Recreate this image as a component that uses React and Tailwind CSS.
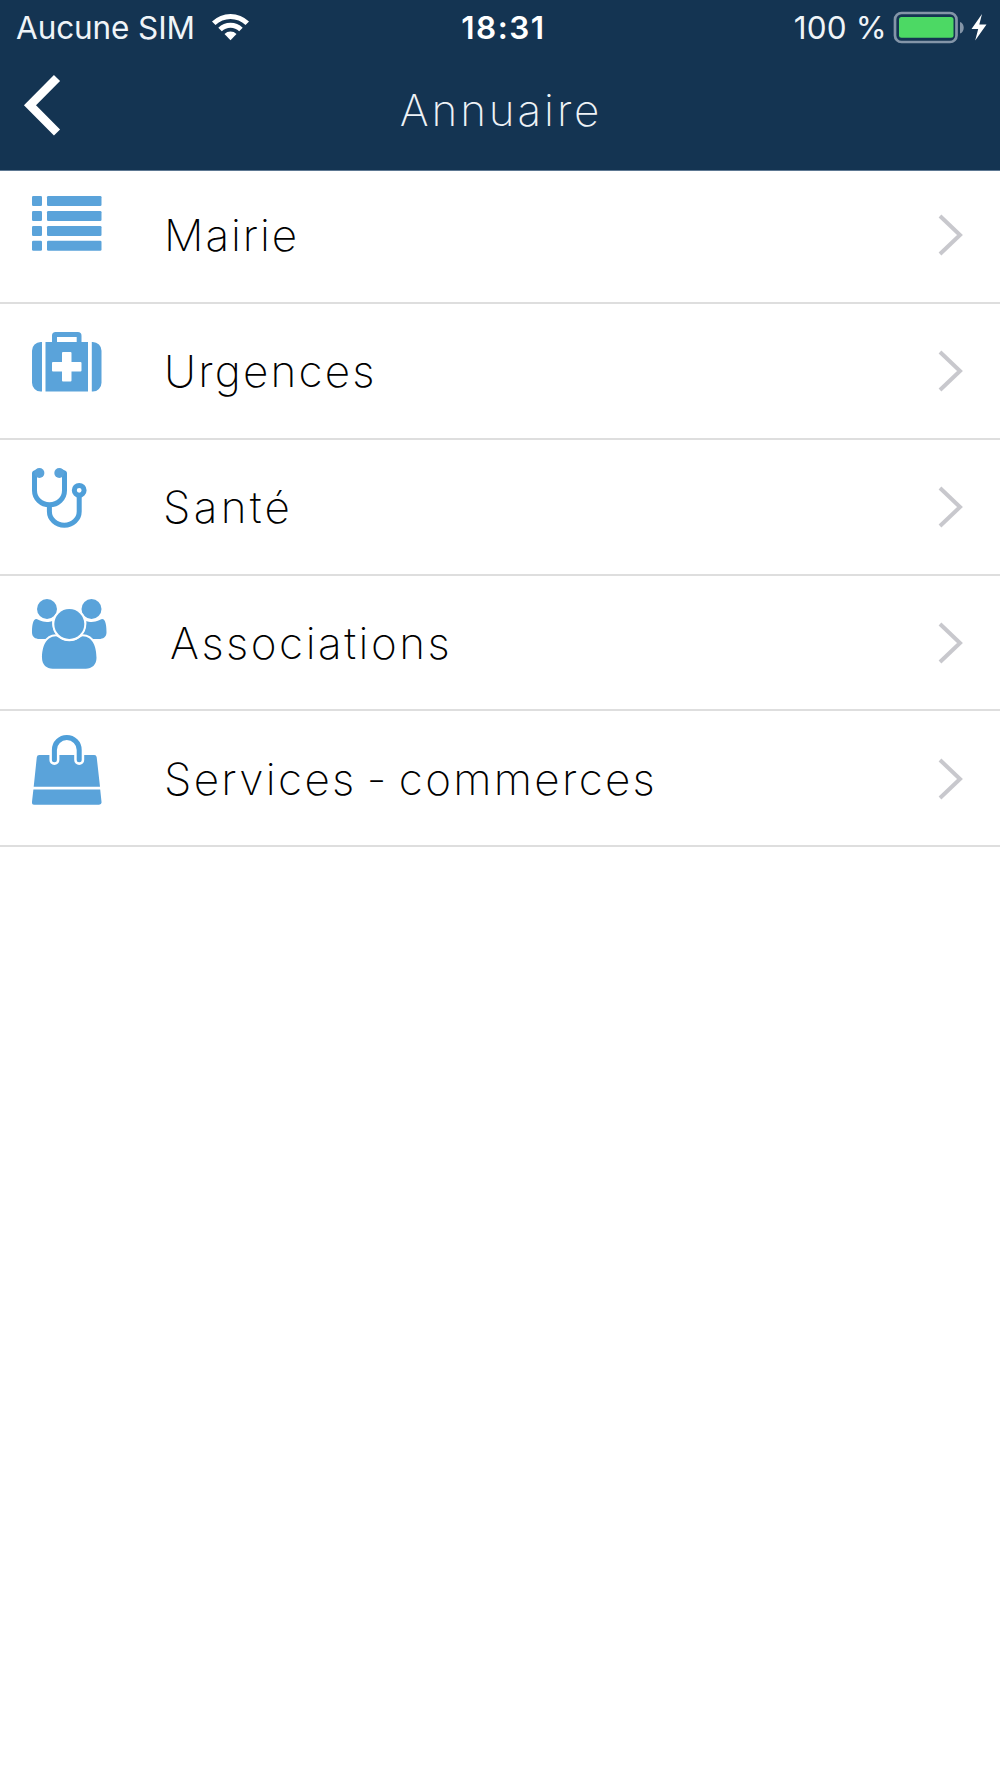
import React from "react";

const ListIcon = () => (
  <svg width="76" height="76" viewBox="0 0 76 76" fill="#5aa3da">
    {[0, 15, 30, 44.7].map((y) => (
      <g key={y}>
        <rect x="0" y={y} width="10" height="10" rx="1.3" />
        <rect x="15" y={y} width="54.5" height="10" rx="1.3" />
      </g>
    ))}
  </svg>
);

const MedkitIcon = () => (
  <svg width="76" height="76" viewBox="0 0 76 76" fill="#5aa3da">
    <path d="M10 10v49.5H8.7a8.7 8.7 0 0 1-8.7-8.7V18.7A8.7 8.7 0 0 1 8.7 10z" />
    <path d="M59.8 10v49.5h1a8.7 8.7 0 0 0 8.7-8.7V18.7a8.7 8.7 0 0 0-8.7-8.7z" />
    <path
      fillRule="evenodd"
      d="M13.5 10H20V3.7A3.7 3.7 0 0 1 23.7 0h22.1a3.7 3.7 0 0 1 3.7 3.7V10H56v49.5H13.5zM25 5v5h19.7V5zM31 20a1 1 0 0 0-1 1v9h-9a1 1 0 0 0-1 1v7.5a1 1 0 0 0 1 1h9v9a1 1 0 0 0 1 1h7.5a1 1 0 0 0 1-1v-9h9a1 1 0 0 0 1-1V31a1 1 0 0 0-1-1h-9v-9a1 1 0 0 0-1-1z"
    />
  </svg>
);

const StethoscopeIcon = () => (
  <svg width="76" height="76" viewBox="0 0 76 76" fill="none" stroke="#4f9fd9" strokeWidth="5">
    <path d="M6 3.5L2.5 5v17.5c0 8 6.5 14.3 15 14.3s15-6.3 15-14.3V5L29 3.5" strokeLinejoin="round" />
    <path d="M17.4 37v6.5c0 7.5 6.5 13.7 14.9 13.7s14.9-6.2 14.9-13.7V28" />
    <circle cx="7.4" cy="5" r="5" fill="#5aa3da" stroke="none" />
    <circle cx="27.3" cy="5" r="5" fill="#5aa3da" stroke="none" />
    <circle cx="47.2" cy="22.3" r="4.9" />
  </svg>
);

const UsersIcon = () => (
  <svg width="76" height="76" viewBox="0 0 76 76" fill="#5aa3da">
    <circle cx="15" cy="10" r="10" />
    <circle cx="59.5" cy="10" r="10" />
    <path d="M4.5 20c1.200 0 4.700 3 10.500 3 2 0 3.500-.4 5.200-1 0 6.500 1.700 10.500 4.600 14.500-3.500 0-6.800 1-9.400 3.500H7.500C3.500 40 0 38 0 33.500 0 28 .5 20 4.500 20z" />
    <path d="M70 20c-1.200 0-4.700 3-10.500 3-2 0-3.500-.4-5.200-1 0 6.500-1.700 10.500-4.600 14.500 3.500 0 6.800 1 9.400 3.500H67c4 0 7.500-2 7.500-6.500C74.500 28 74 20 70 20z" />
    <path
      stroke="#fff"
      strokeWidth="4"
      paintOrder="stroke"
      d="M24 37.300c1.600 0 5.600 5 13.300 5s11.700-5 13.300-5c10.500 0 13.900 11.500 13.900 21.500 0 7-4.700 11-10.700 11H20.700C14.700 69.800 10 65.800 10 58.800c0-10 3.500-21.500 14-21.500z"
    />
    <circle cx="37.3" cy="25" r="15" stroke="#fff" strokeWidth="4" paintOrder="stroke" />
  </svg>
);

const BagIcon = () => (
  <svg width="76" height="76" viewBox="0 0 76 76" fill="#5aa3da">
    <path d="M7.3 20h54.900a2.500 2.500 0 0 1 2.500 2.200l3.300 29.600H1.700L4.800 22.200A2.500 2.500 0 0 1 7.300 20z" />
    <path d="M1.4 54.500h66.800l1.300 12.300a2.500 2.500 0 0 1-2.500 2.900H2.500A2.500 2.500 0 0 1 0 66.800z" />
    <path d="M22.4 17.500v7.500M47.200 17.500v7.500" stroke="#fff" strokeWidth="10" strokeLinecap="round" fill="none" />
    <path d="M22.4 24.700V14.900a12.400 12.400 0 0 1 24.800 0v9.800" stroke="#4f9fd9" strokeWidth="5" strokeLinecap="round" fill="none" />
  </svg>
);

const rows = [
  { label: "Mairie", Icon: ListIcon, height: "h-[133px]", icon: "mt-[25px]", text: "mt-[35px] ml-[56px] tracking-[1.9px]", arrow: "mt-[43px]" },
  { label: "Urgences", Icon: MedkitIcon, height: "h-[136px]", icon: "mt-[28px]", text: "mt-[38px] ml-[56px] tracking-[2.2px]", arrow: "mt-[46px]" },
  { label: "Santé", Icon: StethoscopeIcon, height: "h-[136px]", icon: "mt-[28px]", text: "mt-[38px] ml-[55px] tracking-[3.3px]", arrow: "mt-[46px]" },
  { label: "Associations", Icon: UsersIcon, height: "h-[135px]", icon: "mt-[23px]", text: "mt-[38px] ml-[62px] tracking-[2.5px]", arrow: "mt-[46px]" },
  { label: "Services - commerces", Icon: BagIcon, height: "h-[136px]", icon: "mt-[24px]", text: "mt-[39px] ml-[56px] tracking-[2.3px] [word-spacing:-4.5px]", arrow: "mt-[47px]" },
];

const StatusBar = () => (
  <div className="grid h-[56px] grid-cols-3 text-[31.5px] leading-[56px] text-[#f0f4f8]">
    <div className="flex pl-[16px]">
      <span className="tracking-[-0.1px]">Aucune SIM</span>
      <svg className="mt-[12px] ml-[16px]" width="40" height="30" viewBox="0 0 40 30" fill="#fff">
        <path d="M1 9.500a26.500 26.500 0 0 1 37 0L34.500 13a21.500 21.500 0 0 0-30 0z" />
        <path d="M7.3 15.800a17.500 17.500 0 0 1 24.400 0L28.200 19.300a12.500 12.500 0 0 0-17.400 0z" />
        <path d="M13.5 22.100a8.500 8.500 0 0 1 12 0L19.500 28.200z" />
      </svg>
    </div>
    <div className="pl-[7px] text-center font-semibold text-white tracking-[1.5px]">18:31</div>
    <div className="flex justify-end pr-[12px]">
      <span className="tracking-[0.2px]">100 %</span>
      <svg className="mt-[11px] ml-[5px]" width="96" height="34" viewBox="0 0 96 34">
        <rect x="3" y="2" width="61.5" height="29" rx="6.5" fill="none" stroke="#8495a8" strokeWidth="2.7" />
        <rect x="7" y="6" width="54.5" height="20.7" rx="2.5" fill="#4cd964" />
        <path d="M68 11c5 1.500 5 10 0 11.500z" fill="#8495a8" />
        <path d="M90 3L79.500 18h6.700l-3 11.500L94.500 13.500h-7.200z" fill="#fff" />
      </svg>
    </div>
  </div>
);

const App = () => {
  return (
    <div className="min-h-[1778px] w-[1000px] bg-white font-['Inter',sans-serif]">
      <header className="h-[171px] border-b border-[#5d7892] bg-[#143452]">
        <StatusBar />
        <div className="flex h-[110px] items-start">
          <svg className="mt-[17px] ml-[22px]" width="42" height="66" viewBox="0 0 42 66" fill="none">
            <path d="M35 5L8 32.300 35 59.500" stroke="#fff" strokeWidth="8.6" />
          </svg>
          <h1 className="flex-1 pt-[26px] pr-[62px] text-center text-[44px] leading-[56px] font-extralight tracking-[2.9px] text-[#eef2f6]">
            Annuaire
          </h1>
        </div>
      </header>

      <ul>
        {rows.map(({ label, Icon, height, icon, text, arrow }) => (
          <li key={label} className={`flex items-start border-b-2 border-[#dedede] pl-[32px] ${height}`}>
            <div className={icon}>
              <Icon />
            </div>
            <span className={`flex-1 text-[44px] leading-[58px] font-extralight whitespace-nowrap text-black ${text}`}>
              {label}
            </span>
            <svg className={`mr-[36px] ${arrow}`} width="28" height="42" viewBox="0 0 28 42" fill="none">
              <path d="M4 2L24 21 4 40" stroke="#c8c8cd" strokeWidth="4" />
            </svg>
          </li>
        ))}
      </ul>
    </div>
  );
};

export default App;
